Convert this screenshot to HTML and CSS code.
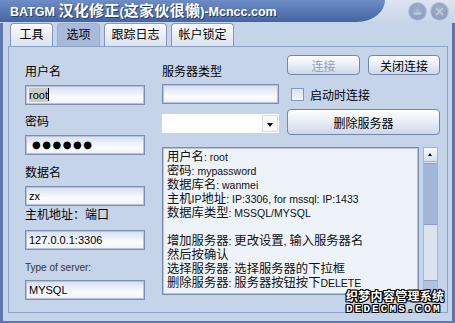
FILE: index.html
```html
<!DOCTYPE html>
<html lang="zh-CN">
<head>
  <meta charset="UTF-8">
  <title>BATGM 汉化修正</title>
  <link rel="stylesheet" href="styles.css">
</head>
<body>
  <div class="window">
    <div class="titlebar">
      <div class="caption">BATGM <span class="cn">汉化修正</span>(<span class="cn">这家伙很懒</span>)-Mcncc.com</div>
      <div class="winbtns">
        <span class="wbtn">
          <svg width="17" height="17" viewBox="0 0 17 17"><path d="M5.5 10.5h6" stroke="#c4cde0" stroke-width="2" stroke-linecap="round"/><path d="M7.5 6.5h2v2h-2z" fill="#b3bed6"/></svg>
        </span>
        <span class="wbtn">
          <svg width="17" height="17" viewBox="0 0 17 17"><path d="M5.5 5.5l6 6M11.5 5.5l-6 6" stroke="#c4cde0" stroke-width="1.6" stroke-linecap="round"/></svg>
        </span>
      </div>
    </div>

    <div class="frame">
      <div class="tabs">
        <div class="tab">工具</div>
        <div class="tab active">选项</div>
        <div class="tab wide">跟踪日志</div>
        <div class="tab wide">帐户锁定</div>
      </div>

      <div class="panel">
        <div class="col-left">
          <label class="lbl">用户名</label>
          <div class="field"><span class="selected">root</span><span class="caret"></span></div>
          <label class="lbl">密码</label>
          <div class="field dots">●●●●●●</div>
          <label class="lbl gap11">数据名</label>
          <div class="field">zx</div>
          <label class="lbl host">主机地址：端口</label>
          <div class="field">127.0.0.1:3306</div>
          <label class="lbl type">Type of server:</label>
          <div class="field">MYSQL</div>
        </div>

        <div class="col-main">
          <div class="top">
            <div class="col-mid">
              <label class="lbl srv">服务器类型</label>
              <div class="field"></div>
              <div class="combo"><span class="combo-btn"></span></div>
            </div>
            <div class="col-right">
              <div class="btnrow">
                <button class="btn off">连接</button>
                <button class="btn">关闭连接</button>
              </div>
              <label class="check"><span class="box"></span>启动时连接</label>
              <button class="btn big">删除服务器</button>
            </div>
          </div>

          <div class="memo-wrap">
            <div class="memo">
              <div>用户名<span class="en">: root</span></div>
              <div>密码<span class="en">: mypassword</span></div>
              <div>数据库名<span class="en">: wanmei</span></div>
              <div>主机<span class="en">IP</span>地址<span class="en">: IP:3306, for mssql: IP:1433</span></div>
              <div>数据库类型<span class="en">: MSSQL/MYSQL</span></div>
              <div>&nbsp;</div>
              <div>增加服务器<span class="en">: </span>更改设置<span class="en">, </span>输入服务器名</div>
              <div>然后按确认</div>
              <div>选择服务器<span class="en">: </span>选择服务器的下拉框</div>
              <div>删除服务器<span class="en">: </span>服务器按钮按下<span class="en">DELETE</span></div>
            </div>
            <div class="scrollbar">
              <div class="sb-arrow up"></div>
              <div class="sb-thumb"></div>
              <div class="sb-track"></div>
              <div class="sb-arrow down"></div>
            </div>
          </div>
        </div>
      </div>
    </div>

    <div class="watermark">
      <div class="wm-cn">织梦内容管理系统</div>
      <div class="wm-en">DEDECMS.COM</div>
    </div>
  </div>
</body>
</html>
```

FILE: styles.css
```css
body { margin: 0; width: 455px; height: 323px; overflow: hidden; background: #c6d4ea; font-family: "Liberation Sans", "Noto Sans CJK SC", sans-serif; font-size: 12px; color: #000; }
.window { position: relative; width: 455px; height: 323px; }

/* title bar */
.titlebar { display: flex; height: 22px; background: linear-gradient(#dde5f1, #c9d5e9); }
.caption { width: 385px; box-sizing: border-box; padding-left: 10px; background: linear-gradient(#6d8dc7, #4564a2); border-bottom-right-radius: 28px 22px; color: #fff; font-weight: bold; font-size: 12.5px; line-height: 21px; white-space: nowrap; text-shadow: 1px 1px 0 #2b3f69; }
.caption .cn { font-size: 15px; letter-spacing: 0.3px; }
.winbtns { flex: 1; display: flex; gap: 5px; padding: 3px 0 0 24px; }
.wbtn { width: 17px; height: 17px; border-radius: 50%; background: radial-gradient(circle at 50% 40%, #a3b0cc, #8797ba); box-shadow: 0 0 0 1px #b7c3dc; }
.wbtn svg { display: block; }

/* frame + tabs */
.frame { height: 301px; box-sizing: border-box; border: 3px solid #5c78ae; border-top: 0; padding: 0 4px 7px 5px; }
.tabs { display: flex; gap: 4px; height: 23px; margin: 1px 0 0 2px; }
.tab { width: 43px; height: 23px; box-sizing: border-box; border: 1px solid #8597bd; border-bottom: 0; border-radius: 4px 4px 0 0; background: linear-gradient(#fbfcfe, #dae3f1); text-align: center; line-height: 22px; }
.tab.wide { width: 63px; }
.tab.active { background: #a8badc; border-color: #9aadd0; }

.panel { height: 267px; box-sizing: border-box; border: 1px solid #8ea2c6; display: flex; gap: 17px; padding: 8px 7px 0 16px; }

/* fields */
.col-left { width: 120px; display: flex; flex-direction: column; }
.lbl { display: block; line-height: 14px; margin: 10px 0 6px; white-space: nowrap; }
.lbl.gap11 { margin-top: 11px; }
.lbl.host { margin: 2px 0 8px; }
.lbl.type { margin: 11px 0 5px; font-size: 10px; color: #333; }
.lbl.srv { margin-bottom: 5px; }
.field { height: 20px; box-sizing: border-box; border: 1px solid #7d8eb1; box-shadow: inset 0 0 0 1px #b7c3da; background: linear-gradient(#d5dff0, #fbfcfe 65%, #edf1f8); padding: 0 3px; font-size: 11px; line-height: 18px; white-space: nowrap; }
.field .selected { background: #cbcbc6; padding: 1px 0; }
.caret { display: inline-block; width: 1px; height: 13px; background: #000; vertical-align: -2px; }
.field.dots { font-family: "DejaVu Sans", sans-serif; font-size: 10px; letter-spacing: 1.5px; padding-left: 6px; line-height: 17px; }

.col-main { width: 278px; }
.top { display: flex; gap: 8px; height: 80px; }
.col-mid { width: 117px; display: flex; flex-direction: column; }
.combo { position: relative; height: 19px; margin-top: 10px; background: #fff; }
.combo-btn { position: absolute; right: 1px; top: 1px; width: 16px; height: 17px; box-sizing: border-box; border: 1px solid #d7deea; background: #f6f8fb; }
.combo-btn::after { content: ""; position: absolute; left: 4px; top: 7px; border: 3.5px solid transparent; border-top: 4px solid #000; border-bottom: 0; }

.col-right { width: 153px; display: flex; flex-direction: column; }
.btnrow { display: flex; gap: 8px; }
.btn { width: 73px; height: 20px; padding: 0; border: 1px solid #7586aa; border-radius: 4px; background: linear-gradient(#fefefe, #e8edf6 50%, #ccd7ea); font: 12px "Liberation Sans", "Noto Sans CJK SC", sans-serif; color: #000; }
.btn + .btn { width: 72px; }
.btn.off { color: #97a1b5; }
.btn.big { width: 153px; height: 26px; margin-top: 8px; }
.check { display: flex; align-items: center; gap: 6px; height: 13px; margin-top: 13px; padding-left: 4px; white-space: nowrap; }
.box { width: 13px; height: 13px; box-sizing: border-box; border: 1px solid #8596b9; background: linear-gradient(#d9e2f0, #f4f6fa); }

/* memo */
.memo-wrap { display: flex; gap: 4px; height: 148px; margin-top: 12px; }
.memo { width: 257px; box-sizing: border-box; border: 1px solid #7a8bae; box-shadow: inset 0 0 0 1px #b7c3d9; background: #eef2f9; padding: 2px 0 0 4px; overflow: hidden; font-size: 12.3px; line-height: 14px; white-space: nowrap; color: #111; }
.memo .en { font-size: 10.5px; }

.scrollbar { width: 15px; display: flex; flex-direction: column; background: #dbe3f0; border: 1px solid #a6b4cf; box-sizing: border-box; }
.sb-arrow { position: relative; height: 13px; background: linear-gradient(#f7f9fc, #d6dfee); border-bottom: 1px solid #a6b4cf; }
.sb-arrow.down { border-bottom: 0; border-top: 1px solid #8d9fc2; background: #b3c3de; }
.sb-arrow.up::after { content: ""; position: absolute; left: 4px; top: 5px; border: 2.5px solid transparent; border-bottom: 3px solid #000; border-top: 0; }
.sb-thumb { height: 60px; margin-top: 1px; background: #a3b6d8; border: 1px solid #8d9fc3; border-left: 0; border-right: 0; }
.sb-track { flex: 1; }

/* watermark over the corner */
.watermark { position: absolute; left: 346px; top: 290px; color: #fff; font-weight: bold; text-shadow: 1px 0 0 #000, -1px 0 0 #000, 0 1px 0 #000, 0 -1px 0 #000, 1px 1px 0 #000, -1px -1px 0 #000, 1px -1px 0 #000, -1px 1px 0 #000; }
.wm-cn { font-family: "Noto Sans CJK SC", sans-serif; font-size: 12px; letter-spacing: 0.3px; line-height: 12px; }
.wm-en { font-family: "Liberation Mono", monospace; font-size: 11px; letter-spacing: 2.1px; line-height: 11px; margin-top: 2px; }
```
